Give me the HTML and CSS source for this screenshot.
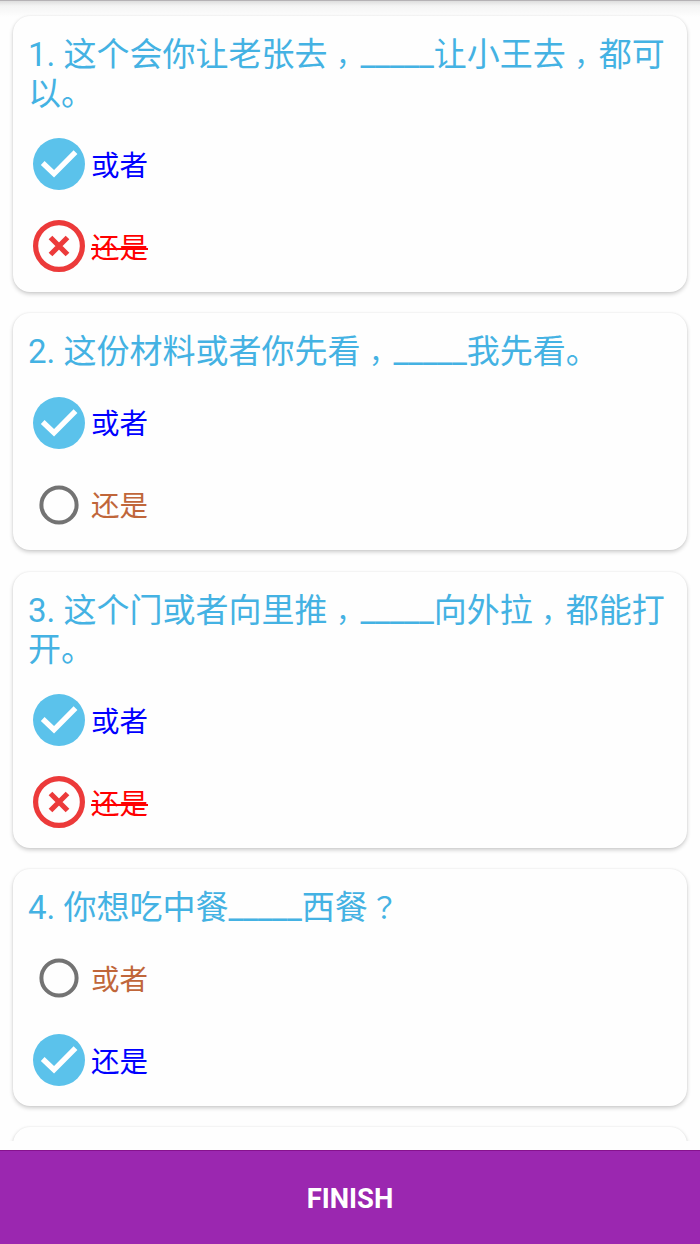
FILE: index.html
```html
<!DOCTYPE html>
<html lang="zh-CN">
<head>
<meta charset="utf-8">
<title>Quiz</title>
<link rel="stylesheet" href="styles.css">
</head>
<body>
<svg class="defs" width="0" height="0">
  <symbol id="check" viewBox="0 0 52 52"><circle cx="26" cy="26" r="26" fill="#5bc2eb"/><path d="M9.7 25 L21 35.8 L42.5 14.2" fill="none" stroke="#fff" stroke-width="5.4"/></symbol>
  <symbol id="cross" viewBox="0 0 52 52"><circle cx="26" cy="26" r="23.4" fill="none" stroke="#ec3a3a" stroke-width="5.2"/><path d="M17.5 17.5 L34.5 34.5 M34.5 17.5 L17.5 34.5" fill="none" stroke="#ec3a3a" stroke-width="5.2"/></symbol>
  <symbol id="radio" viewBox="0 0 52 52"><circle cx="26" cy="26" r="17.6" fill="none" stroke="#737373" stroke-width="4"/></symbol>
</svg>
<div class="screen">
  <main class="list">
    <section class="card">
      <h2 class="question">1. 这个会你让老张去<span class="punct">，</span><span class="blank">_____</span>让小王去<span class="punct">，</span>都可<br>以。</h2>
      <div class="option correct"><svg class="icon"><use href="#check"/></svg><span>或者</span></div>
      <div class="option wrong"><svg class="icon"><use href="#cross"/></svg><span>还是</span></div>
    </section>
    <section class="card">
      <h2 class="question">2. 这份材料或者你先看<span class="punct">，</span><span class="blank">_____</span>我先看。</h2>
      <div class="option correct"><svg class="icon"><use href="#check"/></svg><span>或者</span></div>
      <div class="option"><svg class="icon"><use href="#radio"/></svg><span>还是</span></div>
    </section>
    <section class="card">
      <h2 class="question">3. 这个门或者向里推<span class="punct">，</span><span class="blank">_____</span>向外拉<span class="punct">，</span>都能打<br>开。</h2>
      <div class="option correct"><svg class="icon"><use href="#check"/></svg><span>或者</span></div>
      <div class="option wrong"><svg class="icon"><use href="#cross"/></svg><span>还是</span></div>
    </section>
    <section class="card">
      <h2 class="question">4. 你想吃中餐<span class="blank">_____</span>西餐<span class="ask" lang="zh-TW">？</span></h2>
      <div class="option"><svg class="icon"><use href="#radio"/></svg><span>或者</span></div>
      <div class="option correct"><svg class="icon"><use href="#check"/></svg><span>还是</span></div>
    </section>
    <section class="card next"></section>
  </main>
  <button class="finish">FINISH</button>
</div>
</body>
</html>
```
FILE: styles.css
```css
* { box-sizing: border-box; }
body {
  margin: 0;
  background: #fefefe;
  font-family: Roboto, "Noto Sans CJK SC", sans-serif;
}
.defs { display: block; }
.screen {
  height: 1244px;
  display: flex;
  flex-direction: column;
  overflow: hidden;
}
.list {
  height: 1141px;
  flex: none;
  margin-bottom: 9px;
  padding: 16px 13px 0;
  display: flex;
  flex-direction: column;
  gap: 21.3px;
  overflow: hidden;
  background: linear-gradient(#b5b2b5 0, #b5b2b5 1px, #dedede 1px, #f4f4f4 6px, #fefefe 17px);
}
.card {
  flex: none;
  padding: 19px 15px 4.6px;
  border-radius: 17px;
  background: #fefefe;
  box-shadow: 0 2px 4px rgba(0, 0, 0, .2), 0 0 2px rgba(0, 0, 0, .07);
}
.next { height: 237px; }
.question {
  margin: 0 0 10.4px;
  color: #44b2e3;
  font-size: 33px;
  font-weight: 400;
  line-height: 39px;
  white-space: nowrap;
}
.punct {
  padding: 0 10.5px 0 8.5px;
  font-size: 28px;
  line-height: 1;
  font-feature-settings: "halt";
}
.ask {
  padding-left: 2px;
  font-family: "Noto Sans CJK TC", sans-serif;
  font-size: 29px;
  line-height: 1;
}
.blank { letter-spacing: -.25px; }
.option {
  height: 82px;
  padding-left: 5px;
  display: flex;
  align-items: center;
  gap: 6px;
  color: #c0663a;
  font-size: 28.5px;
}
.option span { padding-bottom: 1.6px; }
.icon { width: 52px; height: 52px; }
.correct { color: #00f; }
.wrong { color: #f00; }
.wrong span { text-decoration: line-through; text-decoration-thickness: 2px; }
.finish {
  height: 94px;
  flex: none;
  padding-top: 3px;
  border: 0;
  border-top: 1px solid #86128d;
  background: #9b27b0;
  color: #fff;
  font: 700 27.4px Roboto, sans-serif;
}
```
